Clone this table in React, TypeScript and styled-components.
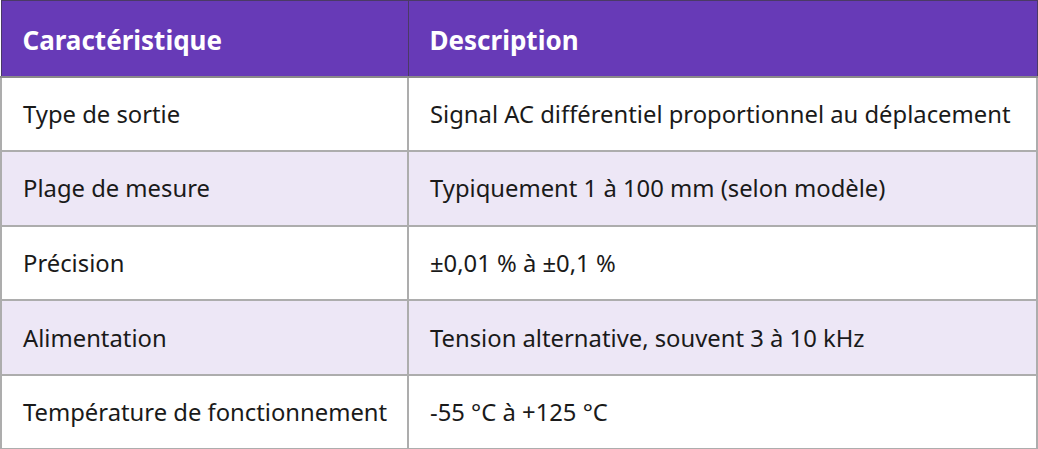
import React from "react";
import styled, { createGlobalStyle } from "styled-components";

const GlobalStyle = createGlobalStyle`
  html, body {
    margin: 0;
    padding: 0;
    background: #ffffff;
  }
  body {
    font-family: "Noto Sans", "Open Sans", sans-serif;
  }
`;

const Table = styled.table`
  width: 1038px;
  border-collapse: collapse;
  table-layout: fixed;
  font-family: "Noto Sans", "Open Sans", sans-serif;
  font-size: 23.8px;
  color: #1a1a1a;
`;

const HeadCell = styled.th<{ $width?: number }>`
  width: ${(p) => (p.$width ? `${p.$width}px` : "auto")};
  height: 76px;
  box-sizing: border-box;
  padding: 4px 21px 0;
  text-align: left;
  font-size: 26px;
  font-weight: 700;
  color: #ffffff;
  background: #673ab7;
  border: 1px solid #4a3a66;
  border-bottom: 2px solid #8a8a8a;
`;

const Row = styled.tr<{ $shaded: boolean }>`
  background: ${(p) => (p.$shaded ? "#ede7f6" : "#ffffff")};
`;

const Cell = styled.td`
  height: 74.6px;
  box-sizing: border-box;
  padding: 0 21px;
  border: 2px solid #adadad;
  white-space: nowrap;
`;

const rows: [string, string][] = [
  ["Type de sortie", "Signal AC différentiel proportionnel au déplacement"],
  ["Plage de mesure", "Typiquement 1 à 100 mm (selon modèle)"],
  ["Précision", "±0,01 % à ±0,1 %"],
  ["Alimentation", "Tension alternative, souvent 3 à 10 kHz"],
  ["Température de fonctionnement", "-55 °C à +125 °C"],
];

export default function App() {
  return (
    <>
      <GlobalStyle />
      <Table>
        <thead>
          <tr>
            <HeadCell $width={407}>Caractéristique</HeadCell>
            <HeadCell>Description</HeadCell>
          </tr>
        </thead>
        <tbody>
          {rows.map(([name, desc], i) => (
            <Row key={name} $shaded={i % 2 === 1}>
              <Cell>{name}</Cell>
              <Cell>{desc}</Cell>
            </Row>
          ))}
        </tbody>
      </Table>
    </>
  );
}
